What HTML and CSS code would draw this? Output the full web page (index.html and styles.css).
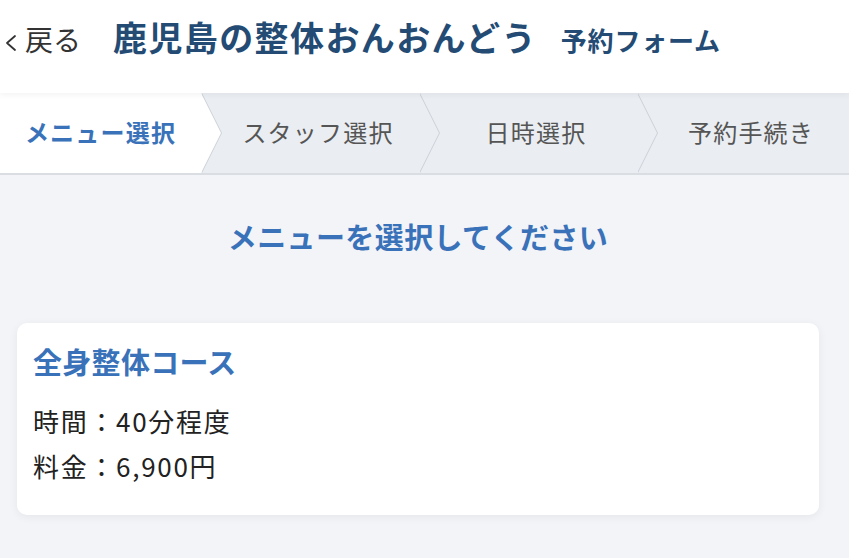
FILE: index.html
```html
<!DOCTYPE html>
<html lang="ja">
<head>
<meta charset="utf-8">
<link rel="stylesheet" href="styles.css">
</head>
<body>
<header class="header">
  <a class="back">
    <svg class="back-icon" width="14" height="18" viewBox="0 0 14 18"><polyline points="11,2 3,9 11,16" fill="none" stroke="#333" stroke-width="1.8" stroke-linecap="round" stroke-linejoin="round"/></svg>
    <span>戻る</span>
  </a>
  <h1 class="title">鹿児島の整体おんおんどう</h1>
  <span class="subtitle">予約フォーム</span>
</header>
<nav class="steps">
  <div class="step active">メニュー選択</div>
  <div class="step">スタッフ選択</div>
  <div class="step">日時選択</div>
  <div class="step last">予約手続き</div>
</nav>
<main class="main">
  <h2 class="heading">メニューを選択してください</h2>
  <section class="card">
    <h3 class="card-title">全身整体コース</h3>
    <p class="row">時間：40分程度</p>
    <p class="row">料金：6,900円</p>
  </section>
</main>
</body>
</html>
```

FILE: styles.css
```css
* { box-sizing: border-box; }
html, body { margin: 0; padding: 0; }
body {
  font-family: "Noto Sans CJK JP", "Noto Sans", sans-serif;
  background: #f2f4f8;
  color: #222;
  width: 849px;
  height: 558px;
  overflow: hidden;
}
.header {
  height: 93px;
  background: #fff;
  display: flex;
  align-items: baseline;
  padding: 17px 0 0 4px;
  box-shadow: 0 2px 6px rgba(0,0,0,0.05);
  position: relative;
  z-index: 3;
}
.back {
  display: flex;
  align-items: baseline;
  color: #333;
  font-size: 28px;
  line-height: 40px;
}
.back-icon { margin-right: 7px; position: relative; top: 1px; }
.title {
  margin: 0 0 0 32px;
  font-size: 34px;
  line-height: 40px;
  letter-spacing: 1.4px;
  font-weight: 700;
  color: #234b74;
}
.subtitle {
  margin-left: 24px;
  font-size: 26px;
  letter-spacing: 0.8px;
  font-weight: 600;
  color: #234b74;
}
.steps {
  display: grid;
  grid-template-columns: 201px 218px 218px 1fr;
  height: 82px;
  background: #eaedf1;
  border-bottom: 2px solid #dadde2;
}
.step {
  position: relative;
  display: flex;
  align-items: center;
  justify-content: center;
  font-size: 24px;
  letter-spacing: 1.2px;
  color: #555;
  padding: 0 0 4px 16px;
  background: #eaedf1;
}
.step.active {
  background: #fff;
  color: #3a72b9;
  font-weight: 700;
  padding-left: 0;
  z-index: 2;
}
.step:nth-child(2) { z-index: 1; }
.step::before,
.step::after {
  content: "";
  position: absolute;
  top: 0;
  height: 100%;
  width: 20px;
  clip-path: polygon(0 0, 100% 50%, 0 100%);
  z-index: 2;
}
.step::before { right: -21px; background: #cdd1d7; }
.step::after { right: -20px; background: inherit; }
.step.last::before, .step.last::after { display: none; }
.main { padding: 41px 30px 0 17px; }
.heading {
  margin: 0;
  text-align: center;
  font-size: 29px;
  line-height: 40px;
  letter-spacing: 0.4px;
  font-weight: 700;
  color: #3a72b9;
}
.card {
  margin-top: 67px;
  background: #fff;
  border-radius: 10px;
  padding: 18px 16px 27px;
  box-shadow: 0 2px 10px rgba(0,0,0,0.06);
}
.card-title {
  margin: 0 0 18px;
  font-size: 29px;
  line-height: 40px;
  letter-spacing: 0.3px;
  font-weight: 700;
  color: #3a72b9;
}
.row {
  margin: 0;
  font-size: 26px;
  line-height: 45px;
  letter-spacing: 1.7px;
  color: #222;
}
.row:first-of-type { margin-top: -1px; }
```
